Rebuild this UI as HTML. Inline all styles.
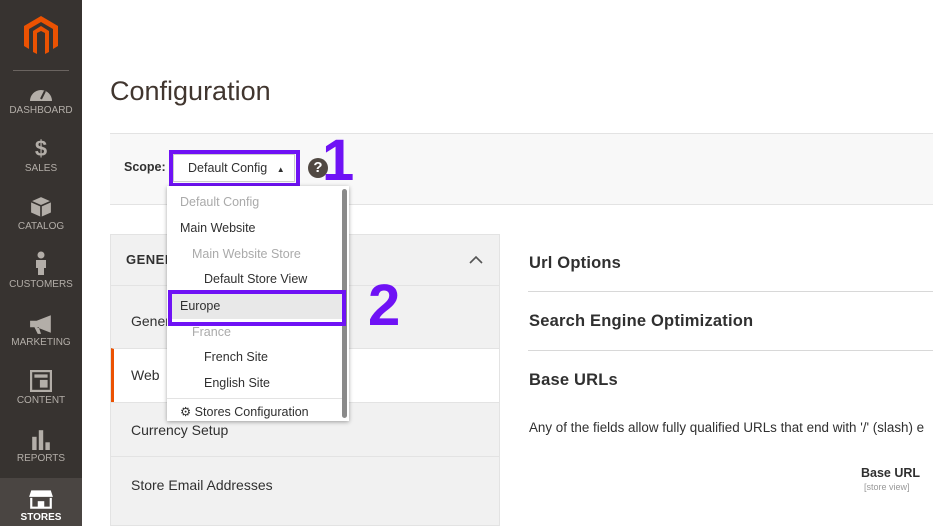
<!DOCTYPE html>
<html><head><meta charset="utf-8"><style>
*{box-sizing:border-box;margin:0;padding:0}
body{width:933px;height:526px;overflow:hidden;background:#fff;font-family:"Liberation Sans",sans-serif;color:#303030;position:relative}
.sb{position:absolute;left:0;top:0;width:82px;height:526px;background:#373330}
.sb .it{position:absolute;left:0;width:82px;text-align:center;color:#b3aea8;font-size:10px}
.sb .it .ic{display:block;margin:0 auto 3px;color:#b3aea8}
.abs{position:absolute}
h1{position:absolute;left:110px;top:76px;font-size:27px;font-weight:normal;color:#41362f}
.scope{position:absolute;left:110px;top:133px;width:823px;height:72px;background:#f8f8f8;border-top:1px solid #e3e3e3;border-bottom:1px solid #e3e3e3}
.panel{position:absolute;left:110px;top:234px;width:390px;height:292px;background:#f1f1f1;border:1px solid #e3e3e3}
.row{position:absolute;left:0;width:388px;border-top:1px solid #e3e3e3;font-size:14px;padding-left:20px}
.dd{position:absolute;left:167px;top:186px;width:182px;height:235px;background:#fff;box-shadow:0 1px 4px rgba(0,0,0,.35);font-size:12.5px}
.dd div{position:absolute;white-space:nowrap}
.hr{position:absolute;left:528px;width:405px;height:1px;background:#d8d8d8}
.sec{position:absolute;left:529px;font-size:16.5px;font-weight:bold;color:#303030;letter-spacing:.2px}
.pb{position:absolute;border:4px solid #6f12f5}
.num{position:absolute;color:#6f12f5;font-weight:bold;font-size:58px;font-family:"Liberation Sans",sans-serif;line-height:1}
</style></head><body>
<div class="sb">
  <svg class="abs" style="left:24px;top:16px" width="34" height="40" viewBox="0 0 34 40"><path d="M17 0 L34 10 V30 L29 33 V13 L17 6 L5 13 V33 L0 30 V10 Z M17 10 L25 15 V36 L21 38 V17 L17 15 L13 17 V38 L9 36 V15 Z" fill="#eb5202"/></svg>
  <div class="abs" style="left:13px;top:70px;width:56px;height:1px;background:#6a6460"></div>
  <div class="it" style="top:84px"><svg class="ic" width="24" height="18" viewBox="0 0 24 18"><path d="M1 17 A11 11 0 0 1 23 17 Z" fill="#b3aea8"/><path d="M12 15 L16 7" stroke="#373330" stroke-width="2"/></svg>DASHBOARD</div>
  <div class="it" style="top:138px"><span class="ic" style="font-size:22px;font-weight:bold;line-height:22px">$</span>SALES</div>
  <div class="it" style="top:196px"><svg class="ic" width="22" height="22" viewBox="0 0 20 20"><path d="M10 1 L19 5 V15 L10 19 L1 15 V5Z" fill="#b3aea8"/><path d="M1 5 L10 9 L19 5 M10 9 V19" stroke="#373330" stroke-width="1.5" fill="none"/></svg>CATALOG</div>
  <div class="it" style="top:250px"><svg class="ic" width="14" height="26" viewBox="0 0 14 24"><circle cx="7" cy="4" r="3.5" fill="#b3aea8"/><path d="M2 9 H12 V17 H10 V24 H4 V17 H2Z" fill="#b3aea8"/></svg>CUSTOMERS</div>
  <div class="it" style="top:314px"><svg class="ic" width="24" height="20" viewBox="0 0 22 18"><path d="M1 6 H7 L20 1 V17 L7 12 H1Z M5 12 L8 18 H11 L9 12Z" fill="#b3aea8"/></svg>MARKETING</div>
  <div class="it" style="top:370px"><svg class="ic" width="22" height="22" viewBox="0 0 20 20"><rect x="1" y="1" width="18" height="18" fill="none" stroke="#b3aea8" stroke-width="2"/><rect x="4" y="4" width="12" height="3" fill="#b3aea8"/><rect x="9" y="9" width="7" height="7" fill="#b3aea8"/></svg>CONTENT</div>
  <div class="it" style="top:428px"><svg class="ic" width="22" height="22" viewBox="0 0 20 20"><rect x="2" y="8" width="4" height="12" fill="#b3aea8"/><rect x="8" y="2" width="4" height="18" fill="#b3aea8"/><rect x="14" y="13" width="4" height="7" fill="#b3aea8"/></svg>REPORTS</div>
  <div class="abs" style="left:0;top:478px;width:82px;height:48px;background:#4a4542"></div>
  <div class="it" style="top:489px;color:#fff;font-weight:bold"><svg class="ic" width="26" height="20" viewBox="0 0 24 18"><path d="M3 1 H21 L23 7 H1Z" fill="#fff"/><path d="M3 8 V17 H21 V8" stroke="#fff" stroke-width="2" fill="none"/><rect x="9" y="11" width="6" height="6" fill="#fff"/></svg>STORES</div>
</div>

<h1>Configuration</h1>
<div class="scope"></div>
<div class="abs" style="left:124px;top:160px;font-size:12.5px;font-weight:bold">Scope:</div>
<div class="abs" style="left:173px;top:154px;width:122px;height:28px;background:#fff;border:1px solid #ccc;font-size:12.5px;padding:6px 0 0 14px">Default Config <span style="font-size:8px;margin-left:6px">▲</span></div>
<div class="abs" style="left:308px;top:158px;width:20px;height:20px;border-radius:50%;background:#514943;color:#fff;font-weight:bold;font-size:15px;text-align:center;line-height:20px">?</div>
<div class="pb" style="left:169px;top:150px;width:131px;height:37px"></div>
<div class="num" style="left:322px;top:132px">1</div>

<div class="panel">
  <div class="abs" style="left:15px;top:17px;font-size:13px;font-weight:bold;letter-spacing:.5px">GENERAL</div>
  <svg class="abs" style="left:358px;top:20px" width="14" height="9" viewBox="0 0 14 9"><path d="M1 8 L7 2 L13 8" stroke="#555" stroke-width="1.6" fill="none"/></svg>
  <div class="row" style="top:50px;height:63px;padding-top:27px">General</div>
  <div class="row" style="top:113px;height:54px;background:#fff;border-left:3px solid #eb5202;padding:18px 0 0 17px">Web</div>
  <div class="row" style="top:167px;height:54px;padding-top:19px">Currency Setup</div>
  <div class="row" style="top:221px;height:54px;padding-top:20px">Store Email Addresses</div>
</div>

<div class="dd">
  <div style="left:13px;top:9px;color:#aaa">Default Config</div>
  <div style="left:13px;top:35px">Main Website</div>
  <div style="left:25px;top:61px;color:#aaa">Main Website Store</div>
  <div style="left:37px;top:86px">Default Store View</div>
  <div style="left:2px;top:106px;width:174px;height:27px;background:#e8e8e8"></div>
  <div style="left:13px;top:113px">Europe</div>
  <div style="left:25px;top:139px;color:#aaa">France</div>
  <div style="left:37px;top:164px">French Site</div>
  <div style="left:37px;top:190px">English Site</div>
  <div style="left:0;top:212px;width:176px;height:1px;background:#e3e3e3"></div>
  <div style="left:13px;top:218px">⚙ Stores Configuration</div>
  <div style="left:175px;top:3px;width:5px;height:229px;background:#8a8a8a;border-radius:3px"></div>
</div>
<div class="pb" style="left:168px;top:290px;width:178px;height:36px"></div>
<div class="num" style="left:368px;top:277px">2</div>

<div class="sec" style="top:254px">Url Options</div>
<div class="hr" style="top:291px"></div>
<div class="sec" style="top:312px">Search Engine Optimization</div>
<div class="hr" style="top:350px"></div>
<div class="sec" style="top:371px">Base URLs</div>
<div class="abs" style="left:529px;top:420px;font-size:13.4px;white-space:nowrap;color:#303030">Any of the fields allow fully qualified URLs that end with '/' (slash) e</div>
<div class="abs" style="left:861px;top:466px;font-size:12.5px;font-weight:bold">Base URL</div>
<div class="abs" style="left:864px;top:482px;font-size:9px;color:#999">[store view]</div>
</body></html>
